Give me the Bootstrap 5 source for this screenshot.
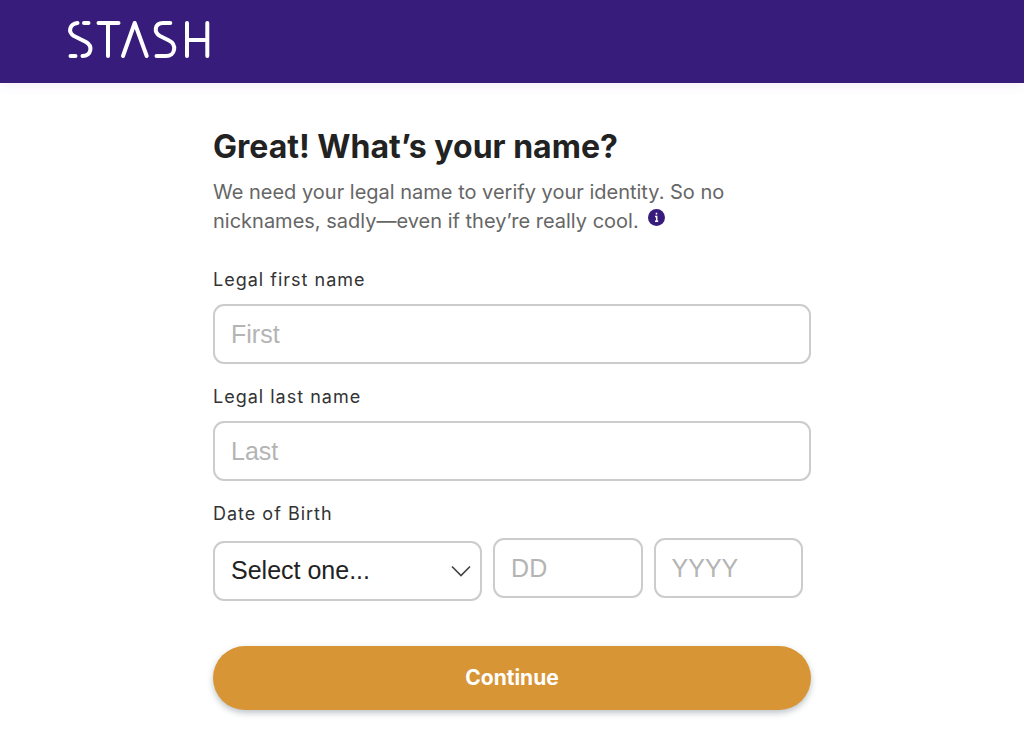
<!DOCTYPE html>
<html lang="en">
<head>
<meta charset="utf-8">
<meta name="viewport" content="width=device-width, initial-scale=1">
<title>Stash - Your name</title>
<link href="https://cdn.jsdelivr.net/npm/bootstrap@5.3.0/dist/css/bootstrap.min.css" rel="stylesheet">
<style>
  body { font-family: Inter, sans-serif; color: #222; background: #fff; }
  .site-bar { background: #371c7c; padding: 19px 66px 22px; box-shadow: 0 1px 12px #f3e9f4; }
  .signup { max-width: 598px; padding-top: 46px; padding-bottom: 24px; }
  .signup h1 { font-size: 32px; line-height: 36px; font-weight: 700; margin-bottom: 13px; color: #222; }
  .intro { font-size: 20px; line-height: 29px; color: #666; margin-bottom: 32px; max-width: 540px; }
  .info-btn { line-height: 0; margin-left: 4px; }
  .field-label { display: block; font-size: 18px; line-height: 24px; letter-spacing: 1px; color: #333; margin-bottom: 12px; }
  .field { height: 60px; border: 2px solid #ccc; border-radius: 11px; padding: 0 16px; font-family: "Liberation Sans", sans-serif; font-size: 25px; color: #222; }
  .field::placeholder { color: #b4b4b4; opacity: 1; }
  .field-group { margin-bottom: 21px; }
  .dob-row { gap: 11px; }
  .month { width: 45%; margin-top: 3px; }
  .day-year { width: 25%; }
  .month select { background-image: none; padding-right: 40px; }
  .chevron { right: 11px; top: 24px; }
  .continue { height: 64px; font-size: 21px; font-weight: 700; color: #fff; background: #d89535; box-shadow: 0 3px 6px rgba(40, 60, 70, .3); margin-top: 45px; }
  .continue:hover { background: #c9862a; color: #fff; }
</style>
</head>
<body>
<header class="site-bar">
  <a href="#" class="d-inline-block align-top" aria-label="Stash">
    <svg class="d-block" width="146" height="42" viewBox="0 0 146 42" fill="none" stroke="#fff" stroke-width="4" stroke-linecap="round" stroke-linejoin="round" aria-hidden="true">
      <path d="M18 4H22.500M11.500 4C3.500 5 1.500 13 8 17L20 23C27 27 25.500 36.500 16.500 37M4.500 37H9.500"/>
      <path d="M32.500 4H52.500M42 4V37M57 37L68.700 4L80.700 37"/>
      <path d="M104.300 4H97C88.500 4 87.500 13.500 94 17L103 21.500C111 25.500 109.500 37 100 37H90.500"/>
      <path d="M121 4V37M141.300 4V37M121 21H141.300"/>
    </svg>
  </a>
</header>
<main class="signup container-fluid px-0">
  <h1>Great! What’s your name?</h1>
  <p class="intro">We need your legal name to verify your identity. So no nicknames, sadly—even if they’re really cool.
    <button type="button" class="info-btn btn border-0 p-0 align-text-top" aria-label="Why we need your legal name">
      <svg width="17" height="17" viewBox="0 0 17 17" aria-hidden="true"><circle cx="8.500" cy="8.500" r="8.500" fill="#371c7c"/><path d="M8.500 3.800v1.800M7 7.400h1.700v5M7 12.200h3.200" stroke="#fff" stroke-width="1.500" fill="none"/></svg>
    </button>
  </p>
  <form>
    <div class="field-group">
      <label class="field-label" for="first">Legal first name</label>
      <input class="field form-control" id="first" type="text" placeholder="First">
    </div>
    <div class="field-group">
      <label class="field-label" for="last">Legal last name</label>
      <input class="field form-control" id="last" type="text" placeholder="Last">
    </div>
    <div>
      <label class="field-label" for="month">Date of Birth</label>
      <div class="dob-row d-flex align-items-start">
        <div class="month position-relative">
          <select class="field form-select" id="month">
            <option>Select one...</option>
            <option>January</option><option>February</option><option>March</option><option>April</option>
            <option>May</option><option>June</option><option>July</option><option>August</option>
            <option>September</option><option>October</option><option>November</option><option>December</option>
          </select>
          <svg class="chevron position-absolute pe-none" width="20" height="13" viewBox="0 0 20 13" fill="none" stroke="#444" stroke-width="1.700" aria-hidden="true"><path d="M1 1.500L10 10.500L19 1.500"/></svg>
        </div>
        <div class="day-year"><input class="field form-control" type="text" inputmode="numeric" placeholder="DD" aria-label="Day of birth"></div>
        <div class="day-year"><input class="field form-control" type="text" inputmode="numeric" placeholder="YYYY" aria-label="Year of birth"></div>
      </div>
    </div>
    <button type="submit" class="continue btn rounded-pill w-100 border-0">Continue</button>
  </form>
</main>
<script src="https://cdn.jsdelivr.net/npm/bootstrap@5.3.0/dist/js/bootstrap.bundle.min.js"></script>
</body>
</html>
